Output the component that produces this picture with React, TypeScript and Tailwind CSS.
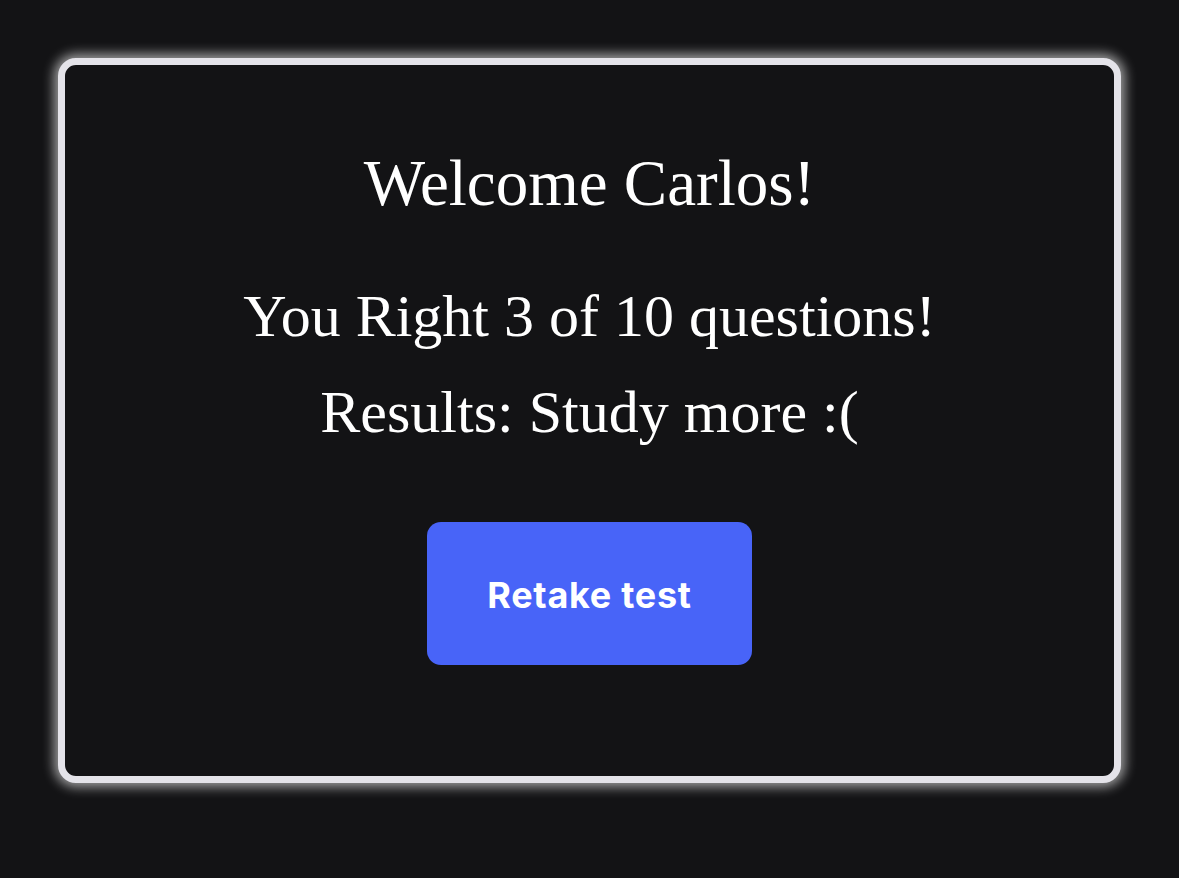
export default function App() {
  return (
    <div className="min-h-[878px] w-full bg-[#131315] px-[58px] pt-[58px]">
      <div className="flex h-[725px] flex-col items-center rounded-[18px] border-[7px] border-[#e4e3e9] bg-[#131315] pt-[86px] shadow-[0_0_12px_4px_rgba(255,255,255,0.6)]">
        <h1 className="text-[65px] leading-[65px] text-white [font-family:'Liberation_Serif',serif]">
          Welcome Carlos!
        </h1>
        <p className="mt-[70px] text-[60px] leading-[60px] text-white [font-family:'Liberation_Serif',serif]">
          You Right 3 of 10 questions!
        </p>
        <p className="mt-[36px] text-[60px] leading-[60px] text-white [font-family:'Liberation_Serif',serif]">
          Results: Study more :(
        </p>
        <button className="mt-[80px] h-[143px] w-[325px] rounded-[14px] bg-[#4864f8] pt-[2px] text-[36px] font-bold tracking-[0.02em] text-white [font-family:Inter,sans-serif]">
          Retake test
        </button>
      </div>
    </div>
  );
}
